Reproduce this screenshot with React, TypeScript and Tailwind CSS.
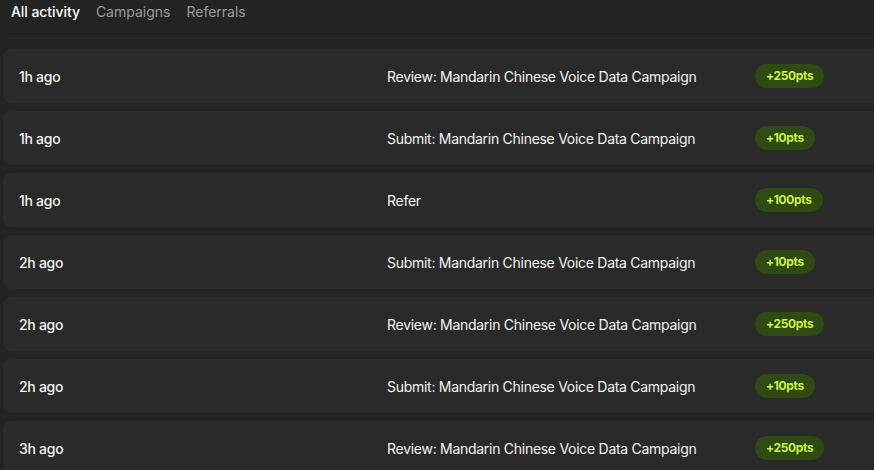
const tabs = ["All activity", "Campaigns", "Referrals"];

const rows = [
  { time: "1h ago", action: "Review: Mandarin Chinese Voice Data Campaign", pts: "+250pts" },
  { time: "1h ago", action: "Submit: Mandarin Chinese Voice Data Campaign", pts: "+10pts" },
  { time: "1h ago", action: "Refer", pts: "+100pts" },
  { time: "2h ago", action: "Submit: Mandarin Chinese Voice Data Campaign", pts: "+10pts" },
  { time: "2h ago", action: "Review: Mandarin Chinese Voice Data Campaign", pts: "+250pts" },
  { time: "2h ago", action: "Submit: Mandarin Chinese Voice Data Campaign", pts: "+10pts" },
  { time: "3h ago", action: "Review: Mandarin Chinese Voice Data Campaign", pts: "+250pts" },
];

export default function App() {
  return (
    <div
      className="h-[470px] w-[874px] overflow-hidden bg-[#232323] text-white"
      style={{ fontFamily: "Inter, 'Noto Sans', sans-serif" }}
    >
      {/* Tabs */}
      <div className="flex h-[22px] items-center gap-4 pl-[11px] text-[14px]">
        {tabs.map((t, i) => (
          <span
            key={t}
            className={i === 0 ? "font-medium tracking-[-0.005em] text-white" : "text-[#9a9a9a]"}
          >
            {t}
          </span>
        ))}
      </div>

      <div className="ml-[7px] mt-[15px] h-[2px] bg-[#282828]" />

      {/* Activity list */}
      <div className="ml-[3px] mt-[10px] flex flex-col gap-2">
        {rows.map((r, i) => (
          <div
            key={i}
            className="flex h-[54px] w-[900px] shrink-0 items-center rounded-lg bg-[#2a2a2a] pl-4 text-[14px] font-medium tracking-[-0.02em]"
          >
            <span className="w-[368px] shrink-0 text-[#f2f2f2]">{r.time}</span>
            <span className="w-[368px] shrink-0 font-normal text-[#f2f2f2]">{r.action}</span>
            <span className="rounded-full bg-[#2f4a12] px-[11px] py-[3px] text-[12px] font-bold tracking-[-0.03em] text-[#c8f24e]">
              {r.pts}
            </span>
          </div>
        ))}
      </div>
    </div>
  );
}
